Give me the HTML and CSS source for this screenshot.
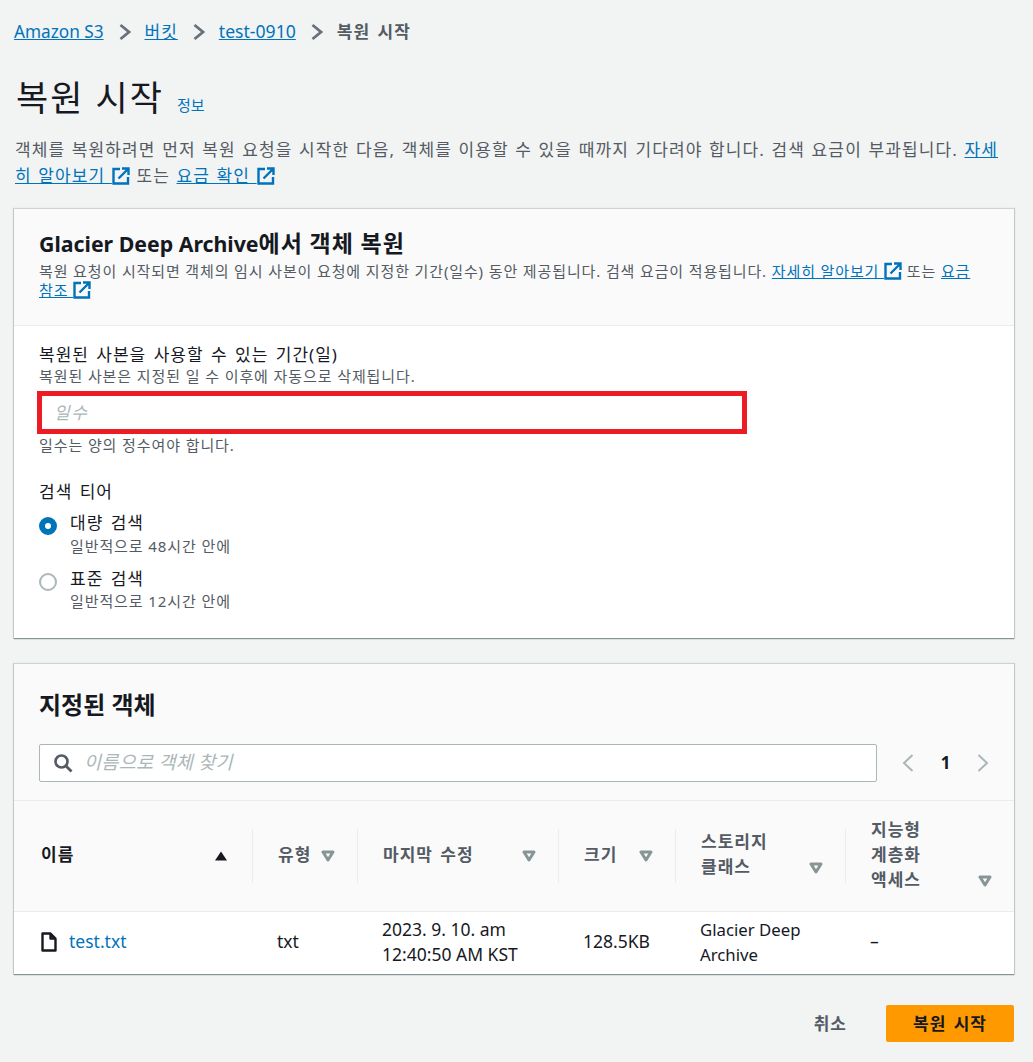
FILE: index.html
```html
<!DOCTYPE html>
<html lang="ko">
<head>
<meta charset="utf-8">
<title>복원 시작</title>
<link rel="stylesheet" href="styles.css">
</head>
<body>
<svg class="defs" width="0" height="0">
  <symbol id="ext" viewBox="0 0 18 18"><path d="M8 2H1.500v14.500H16V10" fill="none" stroke="currentColor" stroke-width="2.400"/><path d="M6.500 11.500 15.500 2.500M10 1.500h6.500V8" fill="none" stroke="currentColor" stroke-width="2.400"/></symbol>
  <symbol id="caret" viewBox="0 0 14 12"><path d="M2 2h10L7 10z" fill="none" stroke="currentColor" stroke-width="3" stroke-linejoin="round"/></symbol>
</svg>
<nav class="crumbs">
  <a class="crumb-latin" href="#">Amazon S3</a>
  <svg class="sep" viewBox="0 0 14 18"><path d="M2.500 2 11 9l-8.500 7" fill="none" stroke="currentColor" stroke-width="2.800"/></svg>
  <a class="ko" href="#">버킷</a>
  <svg class="sep" viewBox="0 0 14 18"><path d="M2.500 2 11 9l-8.500 7" fill="none" stroke="currentColor" stroke-width="2.800"/></svg>
  <a class="crumb-wide" href="#">test-0910</a>
  <svg class="sep" viewBox="0 0 14 18"><path d="M2.500 2 11 9l-8.500 7" fill="none" stroke="currentColor" stroke-width="2.800"/></svg>
  <span class="crumb-current ko">복원 시작</span>
</nav>
<header class="page-head">
  <h1>복원 시작</h1>
  <a class="info" href="#">정보</a>
</header>
<p class="intro">객체를 복원하려면 먼저 복원 요청을 시작한 다음, 객체를 이용할 수 있을 때까지 기다려야 합니다. 검색 요금이 부과됩니다. <a href="#">자세히 알아보기 </a><svg class="ext"><use href="#ext"/></svg> 또는 <a href="#">요금 확인 </a><svg class="ext"><use href="#ext"/></svg></p>

<section class="card">
  <div class="card-head">
    <h2 class="card-title"><span class="latin">Glacier Deep Archive</span>에서 객체 복원</h2>
    <p class="card-desc">복원 요청이 시작되면 객체의 임시 사본이 요청에 지정한 기간(일수) 동안 제공됩니다. 검색 요금이 적용됩니다. <a href="#">자세히 알아보기 </a><svg class="ext"><use href="#ext"/></svg> 또는 <a href="#">요금 참조 </a><svg class="ext"><use href="#ext"/></svg></p>
  </div>
  <div class="card-body">
    <div class="label">복원된 사본을 사용할 수 있는 기간(일)</div>
    <div class="hint">복원된 사본은 지정된 일 수 이후에 자동으로 삭제됩니다.</div>
    <div class="days-box"><input class="days" type="text" placeholder="일수"></div>
    <div class="hint hint-after">일수는 양의 정수여야 합니다.</div>
    <div class="label tier-label">검색 티어</div>
    <div class="radio-row">
      <span class="radio checked"></span>
      <div><div class="label">대량 검색</div><div class="hint">일반적으로 48시간 안에</div></div>
    </div>
    <div class="radio-row">
      <span class="radio"></span>
      <div><div class="label">표준 검색</div><div class="hint">일반적으로 12시간 안에</div></div>
    </div>
  </div>
</section>

<section class="card objects">
  <div class="objects-head">
    <h2 class="objects-title">지정된 객체</h2>
    <div class="tools">
      <div class="search">
        <svg class="search-ico" viewBox="0 0 20 20"><circle cx="8.500" cy="8.500" r="6" fill="none" stroke="currentColor" stroke-width="2.600"/><path d="M13 13l5.500 5.500" stroke="currentColor" stroke-width="2.800" fill="none"/></svg>
        <input type="text" placeholder="이름으로 객체 찾기">
      </div>
      <div class="pager">
        <svg viewBox="0 0 14 20"><path d="M11.500 2 3 10l8.500 8" fill="none" stroke="currentColor" stroke-width="2"/></svg>
        <b>1</b>
        <svg viewBox="0 0 14 20"><path d="M2.500 2 11 10l-8.500 8" fill="none" stroke="currentColor" stroke-width="2"/></svg>
      </div>
    </div>
  </div>
  <table>
    <colgroup><col class="c1"><col class="c2"><col class="c3"><col class="c4"><col class="c5"><col></colgroup>
    <thead>
      <tr>
        <th class="active"><div class="th"><span>이름</span><svg class="sort-up" viewBox="0 0 14 12"><path d="M7 1.500 13 10.500H1z" fill="currentColor"/></svg></div></th>
        <th><div class="th sep-l"><span>유형</span><svg class="caret"><use href="#caret"/></svg></div></th>
        <th><div class="th sep-l"><span>마지막 수정</span><svg class="caret"><use href="#caret"/></svg></div></th>
        <th><div class="th sep-l"><span>크기</span><svg class="caret"><use href="#caret"/></svg></div></th>
        <th><div class="th sep-l"><span>스토리지<br>클래스</span><svg class="caret end2"><use href="#caret"/></svg></div></th>
        <th><div class="th sep-l"><span>지능형<br>계층화<br>액세스</span><svg class="caret end3"><use href="#caret"/></svg></div></th>
      </tr>
    </thead>
    <tbody>
      <tr>
        <td><div class="file"><svg viewBox="0 0 16 20"><path d="M1.500 1.500h8l5 5v12h-13z M9.500 1.500v5h5" fill="none" stroke="#16191f" stroke-width="2.400" stroke-linejoin="round"/></svg><a href="#">test.txt</a></div></td>
        <td class="pl">txt</td>
        <td class="pl">2023. 9. 10. am<br>12:40:50 AM KST</td>
        <td class="pl">128.5KB</td>
        <td class="pl narrow">Glacier Deep<br>Archive</td>
        <td class="pl">–</td>
      </tr>
    </tbody>
  </table>
</section>

<footer class="actions">
  <button class="btn-link" type="button">취소</button>
  <button class="btn-primary" type="button">복원 시작</button>
</footer>
</body>
</html>
```
FILE: styles.css
```css
* { box-sizing: border-box; }
html, body { height: 1062px; overflow: hidden; }
body {
  margin: 0;
  padding: 0 19px 0 14px;
  background: #f2f3f3;
  color: #16191f;
  font-family: "Noto Sans", "Noto Sans CJK KR", sans-serif;
  font-size: 17px;
  line-height: 25px;
}
.defs { position: absolute; }
a { color: #0073bb; }
h1, h2, p { margin: 0; font-weight: 400; }
.ko { letter-spacing: 1px; word-spacing: 2px; }

.crumbs { display: flex; align-items: center; height: 25px; margin-top: 19px; }
.crumb-latin { font-size: 17.200px; }
.crumb-wide { font-size: 17.600px; }
.sep { width: 14px; height: 18px; margin: 0 13px 0 14px; color: #687078; flex: none; }
.crumb-current { color: #545b64; font-weight: 700; }

.page-head { display: flex; align-items: baseline; margin-top: 32px; height: 44px; }
h1 { font-size: 35px; line-height: 44px; margin-left: 2px; letter-spacing: 2px; }
.info { font-size: 15px; text-decoration: none; margin-left: 13px; }

.intro { color: #545b64; margin: 17px 0 0 1px; padding-right: 12px; line-height: 26px; font-size: 17px; letter-spacing: 1.120px; word-spacing: 1px; }
.ext { width: 18px; height: 18px; color: #0073bb; vertical-align: -3px; }

.card { background: #fff; box-shadow: 0 1px 1px 0 #879596, 0 0 1px 1px rgba(0,28,36,.15); margin-top: 20px; }
.card-head { background: #fafafa; border-bottom: 1px solid #eaeded; padding: 20px 25px 0; height: 117px; }
h2 { font-weight: 700; line-height: 28px; }
.card-title { font-size: 23px; letter-spacing: .9px; }
.latin { font-size: 21.300px; letter-spacing: 0; }
.card-desc { margin-top: 4px; font-size: 15px; line-height: 19px; color: #545b64; letter-spacing: .87px; }

.card-body { padding: 17px 25px 0; height: 312px; }
.label { font-size: 17px; line-height: 24px; letter-spacing: 1px; word-spacing: 2px; }
.hint { font-size: 15px; line-height: 19px; color: #545b64; letter-spacing: .9px; }
.days-box { width: 710px; height: 43px; margin: 5px 0 0 -2px; border: 5px solid #ed1c24; background: #fff; }
.days { width: 100%; height: 100%; border: 0; padding: 0 12px; outline: 0; font: italic 17px "Noto Sans", "Noto Sans CJK KR", sans-serif; letter-spacing: 1.500px; background: transparent; }
input::placeholder { color: #aab7b8; opacity: 1; }
.hint-after { margin-top: 2px; }
.tier-label { margin-top: 25px; }
.radio-row { display: flex; gap: 13px; margin-top: 7px; }
.radio-row + .radio-row { margin-top: 11px; }
.radio-row .hint { margin-top: 2px; }
.radio-row + .radio-row .hint { margin-top: 1px; }
.radio { width: 18px; height: 18px; border-radius: 50%; border: 2px solid #aab7b8; margin-top: 6px; flex: none; background: #fff; }
.radio.checked { border: 6px solid #0073bb; }

.objects { margin-top: 26px; background: #fafafa; }
.objects-head { padding: 27px 25px 0; height: 136px; }
.objects-title { font-size: 24px; }
.tools { display: flex; align-items: center; margin-top: 25px; }
.search { flex: none; width: 838px; height: 38px; display: flex; align-items: center; background: #fff; border: 1px solid #aab7b8; border-radius: 2px; padding-left: 13px; }
.search-ico { width: 20px; height: 20px; color: #545b64; flex: none; }
.search input { flex: 1; height: 100%; border: 0; outline: 0; margin-left: 11px; padding: 0 0 3px; background: transparent; font: italic 18.500px "Noto Sans", "Noto Sans CJK KR", sans-serif; letter-spacing: .3px; }
.pager { display: flex; align-items: center; margin-left: 24px; color: #aab7b8; }
.pager svg { width: 14px; height: 20px; flex: none; }
.pager b { color: #16191f; font-size: 17px; width: 61px; margin-top: -2px; text-align: center; }

table { width: 100%; border-collapse: collapse; table-layout: fixed; background: #fff; }
col.c1 { width: 238px; }
col.c2 { width: 105px; }
col.c3 { width: 201px; }
col.c4 { width: 117px; }
col.c5 { width: 170px; }
thead { background: #fafafa; }
th { height: 111px; padding: 0; font-weight: 700; font-size: 17px; line-height: 25px; letter-spacing: 1px; word-spacing: 2px; color: #545b64; text-align: left; border-top: 1px solid #eaeded; border-bottom: 1px solid #eaeded; }
th.active { color: #16191f; }
.th { display: flex; align-items: center; justify-content: space-between; height: 54px; padding: 0 25px; }
.th span { margin-bottom: 4px; white-space: nowrap; }
th.active .th { padding: 0 24px 0 27px; }
.sep-l { border-left: 1px solid #eaeded; padding-right: 22px; }
.sort-up { width: 14px; height: 12px; color: #16191f; }
.caret { width: 14px; height: 12px; color: #879596; flex: none; }
.caret.end2 { margin-top: 24px; }
.caret.end3 { margin-top: 50px; }
td { height: 62px; padding: 0 0 2px; font-size: 17.500px; line-height: 25px; vertical-align: middle; }
td.pl { padding-left: 25px; }
td.narrow { font-size: 16.800px; }
.file { display: flex; align-items: center; padding-left: 27px; gap: 12px; }
.file svg { width: 16px; height: 20px; flex: none; }
.file a { text-decoration: none; }

.actions { display: flex; justify-content: flex-end; align-items: center; margin-top: 31px; }
button { font-family: inherit; font-size: 17px; font-weight: 700; border: 0; cursor: pointer; line-height: 25px; letter-spacing: 1px; word-spacing: 2px; }
.btn-link { background: none; color: #545b64; padding: 0; margin-right: 39px; }
.btn-primary { width: 128px; height: 37px; background: #ff9900; color: #16191f; border-radius: 2px; padding: 0; }
```
